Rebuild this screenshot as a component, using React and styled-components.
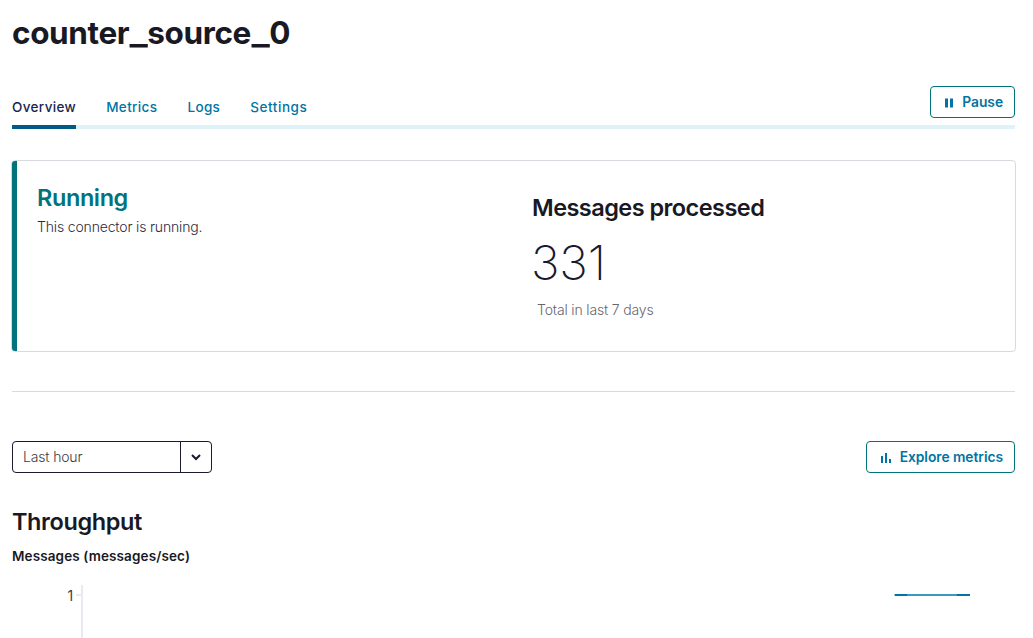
import React from 'react';
import styled, { createGlobalStyle } from 'styled-components';

const Global = createGlobalStyle`
  * { box-sizing: border-box; }
  html, body { margin: 0; background: #fff; overflow: hidden; }
  body { font-family: Inter, "Liberation Sans", sans-serif; color: #191924; font-size: 14px; letter-spacing: -0.16px; }
  h1, h2, h3, p { margin: 0; }
`;
const Page = styled.main`
  height: 638px;
  padding: 0 18px 0 12px;
  display: flex;
  flex-direction: column;
  overflow: hidden;
  & > * { flex-shrink: 0; }
`;
const Title = styled.h1`
  font-size: 31.5px;
  line-height: 40px;
  font-weight: 700;
  letter-spacing: -0.38px;
  padding-top: 13px;
  height: 86px;
`;
const Underscore = styled.span`
  display: inline-block;
  transform: scaleX(1.22);
  margin: 0 2px 0 1.5px;
`;
const Header = styled.div`
  display: flex;
  justify-content: space-between;
  align-items: flex-start;
  height: 43px;
  border-bottom: 4px solid #dff2fa;
`;
const Tabs = styled.nav`
  display: flex;
  gap: 30px;
`;
const Tab = styled.a`
  height: 43px;
  padding-top: 11px;
  line-height: 20px;
  font-size: 13.5px;
  font-weight: 500;
  letter-spacing: ${p => p.$spacing || '0.36px'};
  color: ${p => (p.$active ? '#17264d' : '#0074a2')};
  border-bottom: 4px solid ${p => (p.$active ? '#005c87' : 'transparent')};
`;
const Button = styled.button`
  width: ${p => p.$width}px;
  height: 32px;
  padding: 0 11px 0 0;
  display: flex;
  align-items: center;
  justify-content: flex-end;
  gap: 9px;
  background: #fff;
  border: 1px solid #00737d;
  border-radius: 4px;
  color: #0074a2;
  font: 600 13.8px/20px Inter, sans-serif;
  letter-spacing: -0.04px;
  svg { margin-top: 2px; }
`;
const Card = styled.section`
  display: grid;
  grid-template-columns: 5px 495px 1fr;
  height: 192px;
  margin: 31px -1px 0;
  border: 1px solid #d9d9e0;
  border-radius: 4px;
  overflow: hidden;
`;
const StatusBar = styled.div`background: #00737d;`;
const Status = styled.div`padding: 22px 0 0 20px;`;
const StatusTitle = styled.h2`
  color: #00737d;
  font-size: 23.5px;
  line-height: 30px;
  font-weight: 600;
  letter-spacing: -0.4px;
`;
const StatusText = styled.p`
  color: #2b2b3d;
  font-weight: 300;
  line-height: 20px;
  margin-top: 4px;
`;
const Messages = styled.div`padding: 32px 0 0 20px;`;
const Heading = styled.h2`
  font-size: 23.5px;
  line-height: 30px;
  font-weight: 600;
  letter-spacing: ${p => p.$spacing || '-0.4px'};
`;
const Count = styled.div`
  color: #191930;
  font-size: 48px;
  line-height: 58px;
  font-weight: 200;
  margin: 11px 0 0 -1px;
`;
const Caption = styled.p`
  color: #66666e;
  font-weight: 300;
  line-height: 20px;
  margin: 8px 0 0 5px;
`;
const Divider = styled.hr`
  width: 100%;
  margin: 39px 0 49px;
  border: 0;
  border-top: 1px solid #d9d9e0;
`;
const Controls = styled.div`
  display: flex;
  justify-content: space-between;
`;
const Select = styled.div`
  display: flex;
  width: 200px;
  height: 32px;
  border: 1px solid #191930;
  border-radius: 4px;
`;
const SelectValue = styled.div`
  flex: 1;
  padding-left: 10px;
  color: #3c3c44;
  font-weight: 300;
  line-height: 30px;
`;
const SelectArrow = styled.div`
  width: 31px;
  border-left: 1px solid #191930;
  display: flex;
  align-items: center;
  justify-content: center;
`;
const Throughput = styled.section`padding-top: 34px;`;
const Metric = styled.h3`
  font-size: 13.5px;
  line-height: 20px;
  font-weight: 600;
  letter-spacing: 0.12px;
  margin-top: 9px;
`;
const Chart = styled.svg`
  display: block;
  margin-top: 18px;
`;

export default function App() {
  return (
    <>
      <Global />
      <Page>
        <Title>counter<Underscore>_</Underscore>source<Underscore>_</Underscore>0</Title>
        <Header>
          <Tabs>
            <Tab $active>Overview</Tab>
            <Tab>Metrics</Tab>
            <Tab>Logs</Tab>
            <Tab $spacing="0.56px">Settings</Tab>
          </Tabs>
          <Button $width={85}>
            <svg width="8" height="10"><path d="M0 0.5h3v9H0zM5 0.5h3v9H5z" fill="currentColor" /></svg>
            Pause
          </Button>
        </Header>
        <Card>
          <StatusBar />
          <Status>
            <StatusTitle>Running</StatusTitle>
            <StatusText>This connector is running.</StatusText>
          </Status>
          <Messages>
            <Heading $spacing="-0.54px">Messages processed</Heading>
            <Count>331</Count>
            <Caption>Total in last 7 days</Caption>
          </Messages>
        </Card>
        <Divider />
        <Controls>
          <Select>
            <SelectValue>Last hour</SelectValue>
            <SelectArrow>
              <svg width="10" height="7" fill="none" stroke="#191930" strokeWidth="2"><path d="M1 1l4 4 4-4" /></svg>
            </SelectArrow>
          </Select>
          <Button $width={149}>
            <svg width="10" height="10"><path d="M0 3h2v7H0zM4 0h2v10H4zM8 6h2v4H8z" fill="currentColor" /></svg>
            Explore metrics
          </Button>
        </Controls>
        <Throughput>
          <Heading>Throughput</Heading>
          <Metric>Messages (messages/sec)</Metric>
          <Chart width="1003" height="60">
            <path d="M69 1h2v59h-2zM64 10h5v2h-5z" fill="#e9e9f0" />
            <text x="55.5" y="17" fontSize="14" fontWeight="400" fill="#3c3c44">1</text>
            <path d="M883 11h75" stroke="#3d97c4" strokeWidth="2" />
            <path d="M882.6 11h12.4M945 11h13" stroke="#0074a2" strokeWidth="2" />
          </Chart>
        </Throughput>
      </Page>
    </>
  );
}
